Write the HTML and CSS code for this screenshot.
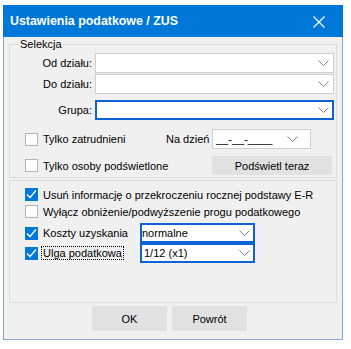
FILE: index.html
```html
<!DOCTYPE html>
<html lang="pl">
<head>
    <meta charset="UTF-8">
    <title>Ustawienia podatkowe / ZUS</title>
    <link rel="stylesheet" href="styles.css">
</head>
<body>
<div class="window">
    <div class="titlebar">
        <span class="title">Ustawienia podatkowe / ZUS</span>
        <svg class="close" width="12" height="12" viewBox="0 0 12 12">
            <path d="M0.5 0.5 L11.5 11.5 M11.5 0.5 L0.5 11.5" stroke="#fff" stroke-width="1.2" fill="none"/>
        </svg>
    </div>
    <div class="content">
        <fieldset class="group">
            <legend>Selekcja</legend>
            <div class="field-row">
                <label class="field-label">Od działu:</label>
                <div class="combo">
                    <span class="combo-value"></span>
                    <svg class="chevron" width="11" height="6" viewBox="0 0 11 6"><polyline points="0.5,0.5 5.5,5.5 10.5,0.5"/></svg>
                </div>
            </div>
            <div class="field-row second">
                <label class="field-label">Do działu:</label>
                <div class="combo">
                    <span class="combo-value"></span>
                    <svg class="chevron" width="11" height="6" viewBox="0 0 11 6"><polyline points="0.5,0.5 5.5,5.5 10.5,0.5"/></svg>
                </div>
            </div>
            <div class="field-row grupa">
                <label class="field-label">Grupa:</label>
                <div class="combo focused">
                    <span class="combo-value"></span>
                    <svg class="chevron" width="11" height="6" viewBox="0 0 11 6"><polyline points="0.5,0.5 5.5,5.5 10.5,0.5"/></svg>
                </div>
            </div>
            <div class="check-row date-row">
                <span class="check-item w-date">
                    <span class="box"></span>
                    <span class="check-text">Tylko zatrudnieni</span>
                </span>
                <span class="date-label">Na dzień</span>
                <div class="date-box">
                    <span class="date-mask">__-__-____</span>
                    <svg class="chevron" width="11" height="6" viewBox="0 0 11 6"><polyline points="0.5,0.5 5.5,5.5 10.5,0.5"/></svg>
                </div>
            </div>
            <div class="check-row button-row">
                <span class="check-item w-button">
                    <span class="box"></span>
                    <span class="check-text">Tylko osoby podświetlone</span>
                </span>
                <button class="btn btn-highlight" type="button">Podświetl teraz</button>
            </div>
        </fieldset>

        <div class="group options">
            <div class="check-row option">
                <span class="check-item">
                    <span class="box checked">
                        <svg width="11" height="11" viewBox="0 0 11 11"><polyline points="1,5.5 4,8.5 10,1.5"/></svg>
                    </span>
                    <span class="check-text">Usuń informację o przekroczeniu rocznej podstawy E-R</span>
                </span>
            </div>
            <div class="check-row option">
                <span class="check-item">
                    <span class="box"></span>
                    <span class="check-text">Wyłącz obniżenie/podwyższenie progu podatkowego</span>
                </span>
            </div>
            <div class="check-row combo-row first">
                <span class="check-item w-combo">
                    <span class="box checked">
                        <svg width="11" height="11" viewBox="0 0 11 11"><polyline points="1,5.5 4,8.5 10,1.5"/></svg>
                    </span>
                    <span class="check-text">Koszty uzyskania</span>
                </span>
                <div class="combo focused small">
                    <span class="combo-value">normalne</span>
                    <svg class="chevron" width="11" height="6" viewBox="0 0 11 6"><polyline points="0.5,0.5 5.5,5.5 10.5,0.5"/></svg>
                </div>
            </div>
            <div class="check-row combo-row">
                <span class="check-item w-combo">
                    <span class="box checked">
                        <svg width="11" height="11" viewBox="0 0 11 11"><polyline points="1,5.5 4,8.5 10,1.5"/></svg>
                    </span>
                    <span class="check-text has-focus">Ulga podatkowa</span>
                </span>
                <div class="combo focused small">
                    <span class="combo-value indent">1/12 (x1)</span>
                    <svg class="chevron" width="11" height="6" viewBox="0 0 11 6"><polyline points="0.5,0.5 5.5,5.5 10.5,0.5"/></svg>
                </div>
            </div>
        </div>

        <div class="buttons">
            <button class="btn btn-dialog" type="button">OK</button>
            <button class="btn btn-dialog" type="button">Powrót</button>
        </div>
    </div>
</div>
</body>
</html>
```

FILE: styles.css
```css
:root {
    --title: #0078d7;
    --face: #f0f0f0;
    --line: #dcdcdc;
    --field-border: #cfcfcf;
    --focus: #0f62d6;
    --button: #e1e1e1;
}
body {
    margin: 0;
    background: #fff;
    font-family: 'Liberation Sans', Arial, sans-serif;
    font-size: 11px;
    color: #000;
}
.window {
    margin: 5px 0 0 3px;
    width: 340px;
    height: 335px;
    box-sizing: border-box;
    background: var(--face);
    border: 1px solid #86a8dc;
    border-top: none;
}
.titlebar {
    height: 32px;
    margin: 0 -1px;
    background: var(--title);
    display: flex;
    align-items: center;
    justify-content: space-between;
    padding: 0 18px 0 7px;
}
.title {
    color: #fff;
    font-weight: bold;
    font-size: 12.4px;
}
.close {
    display: block;
    margin-top: 1px;
}
.content {
    padding: 1px 5px 0 5px;
}
.group {
    margin: 0;
    padding: 2px 2px 2px 0;
    border: 1px solid var(--line);
    min-width: 0;
}
legend {
    margin-left: 9px;
    padding: 0 1px;
    line-height: 13px;
}
.field-row {
    display: flex;
    align-items: center;
    height: 20px;
}
.field-row.second {
    margin-top: 1px;
}
.field-row.grupa {
    margin-top: 6px;
}
.field-label {
    width: 82px;
    text-align: right;
    margin-right: 3px;
}
.combo {
    flex: 1;
    height: 20px;
    box-sizing: border-box;
    background: #fff;
    border: 1px solid var(--field-border);
    display: flex;
    align-items: center;
    justify-content: space-between;
    padding: 0 4px 0 2px;
}
.combo.focused {
    border: 2px solid var(--focus);
    padding: 0 3px 0 0;
}
.combo.small {
    flex: none;
    width: 115px;
}
.combo-value.indent {
    padding-left: 2px;
}
.chevron {
    display: block;
}
.chevron polyline {
    fill: none;
    stroke: #808080;
    stroke-width: 1;
}
.check-row {
    display: flex;
    align-items: center;
}
.check-item {
    display: flex;
    align-items: center;
    margin-left: 15px;
}
.w-date {
    width: 141px;
}
.w-button {
    width: 187px;
}
.w-combo {
    width: 115px;
}
.box {
    width: 13px;
    height: 13px;
    box-sizing: border-box;
    background: #fff;
    border: 1px solid #b4b4b4;
    margin-right: 3px;
    flex: none;
    display: flex;
    align-items: center;
    justify-content: center;
}
.box.checked {
    background: var(--title);
    border-color: var(--title);
}
.box svg polyline {
    fill: none;
    stroke: #fff;
    stroke-width: 1.3;
}
.check-text {
    border: 1px solid transparent;
    padding: 0 1px;
    line-height: 12px;
}
.check-text.has-focus {
    border: 1px dotted #000;
}
.date-row {
    margin-top: 9px;
    height: 20px;
}
.date-label {
    width: 46px;
}
.date-box {
    width: 99px;
    height: 20px;
    box-sizing: border-box;
    background: #fff;
    border: 1px solid var(--field-border);
    display: flex;
    align-items: center;
    justify-content: space-between;
    padding: 0 12px 0 3px;
}
.button-row {
    margin-top: 7px;
    height: 19px;
}
.btn {
    font-family: inherit;
    font-size: 11px;
    color: #000;
    background: var(--button);
    border: none;
    padding: 0;
    cursor: pointer;
}
.btn-highlight {
    width: 120px;
    height: 19px;
}
.options {
    margin-top: 2px;
    height: 123px;
    box-sizing: border-box;
    padding: 5px 2px 0 0;
}
.option {
    height: 17px;
}
.combo-row {
    height: 20px;
}
.combo-row.first {
    margin-top: 3px;
}
.buttons {
    display: flex;
    justify-content: center;
    gap: 5px;
    margin-top: 3px;
    padding-right: 7px;
}
.btn-dialog {
    width: 75px;
    height: 25px;
}
```
